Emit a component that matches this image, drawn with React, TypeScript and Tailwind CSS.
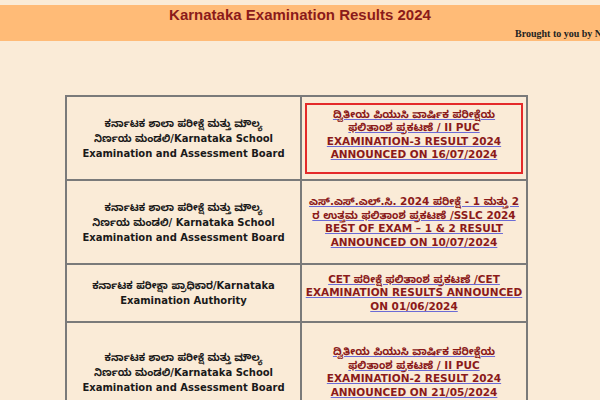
const ROWS = [
  {
    board: ['ಕರ್ನಾಟಕ ಶಾಲಾ ಪರೀಕ್ಷೆ ಮತ್ತು ಮೌಲ್ಯ', 'ನಿರ್ಣಯ ಮಂಡಲಿ/Karnataka School', 'Examination and Assessment Board'],
    result: ['ದ್ವಿತೀಯ ಪಿಯುಸಿ ವಾರ್ಷಿಕ ಪರೀಕ್ಷೆಯ', 'ಫಲಿತಾಂಶ ಪ್ರಕಟಣೆ / II PUC', 'EXAMINATION-3 RESULT 2024', 'ANNOUNCED ON 16/07/2024'],
    h: 'h-[84px]',
    boxed: true,
  },
  {
    board: ['ಕರ್ನಾಟಕ ಶಾಲಾ ಪರೀಕ್ಷೆ ಮತ್ತು ಮೌಲ್ಯ', 'ನಿರ್ಣಯ ಮಂಡಲಿ/ Karnataka School', 'Examination and Assessment Board'],
    result: ['ಎಸ್.ಎಸ್.ಎಲ್.ಸಿ. 2024 ಪರೀಕ್ಷೆ - 1 ಮತ್ತು 2', 'ರ ಉತ್ತಮ ಫಲಿತಾಂಶ ಪ್ರಕಟಣೆ /SSLC 2024', 'BEST OF EXAM – 1 & 2 RESULT', 'ANNOUNCED ON 10/07/2024'],
    h: 'h-[84px]',
  },
  {
    board: ['ಕರ್ನಾಟಕ ಪರೀಕ್ಷಾ ಪ್ರಾಧಿಕಾರ/Karnataka', 'Examination Authority'],
    result: ['CET ಪರೀಕ್ಷೆ ಫಲಿತಾಂಶ ಪ್ರಕಟಣೆ /CET', 'EXAMINATION RESULTS ANNOUNCED', 'ON 01/06/2024'],
    h: 'h-[58px]',
  },
  {
    board: ['ಕರ್ನಾಟಕ ಶಾಲಾ ಪರೀಕ್ಷೆ ಮತ್ತು ಮೌಲ್ಯ', 'ನಿರ್ಣಯ ಮಂಡಲಿ/Karnataka School', 'Examination and Assessment Board'],
    result: ['ದ್ವಿತೀಯ ಪಿಯುಸಿ ವಾರ್ಷಿಕ ಪರೀಕ್ಷೆಯ', 'ಫಲಿತಾಂಶ ಪ್ರಕಟಣೆ / II PUC', 'EXAMINATION-2 RESULT 2024', 'ANNOUNCED ON 21/05/2024'],
    h: 'h-[100px]',
  },
]

const cellFont = "font-['DejaVu_Sans','Noto_Sans_Kannada','Noto_Sans',sans-serif]"

export default function App() {
  return (
    <div className="w-[600px] h-[400px] overflow-hidden bg-[#faebd7] pt-[5px]">
      {/* header band */}
      <div className="h-[36px] bg-[#ffbb77] relative">
        <h1 className="text-center font-['Liberation_Sans',Arial,sans-serif] font-bold text-[15px] leading-[19px] text-[#8b1a1a]">
          Karnataka Examination Results 2024
        </h1>
        <div className="absolute left-[515px] top-[21px] whitespace-nowrap font-['Liberation_Serif',serif] font-bold text-[10px] text-[#222]">
          Brought to you by NIC
        </div>
      </div>

      {/* results table */}
      <div className="pt-[54px] pl-[65px]">
        <table className="border border-[#7a7a7a] border-separate border-spacing-0 w-[463px]">
          <tbody>
            {ROWS.map((row, i) => (
              <tr key={i} className={row.h}>
                <td className={`w-[235px] border border-[#7a7a7a] text-center align-middle ${cellFont} font-bold text-[10px] leading-[15px] text-[#1a1a1a]`}>
                  {row.board.map((l, j) => <div key={j}>{l}</div>)}
                </td>
                <td className="border border-[#7a7a7a] p-[3px] align-middle">
                  <div className={`${row.boxed ? 'border-2 border-[#e42a2a] h-[71px] pb-[7px]' : ''} flex flex-col justify-center text-center ${cellFont} font-bold text-[10.5px] leading-[13.5px] text-[#8b1a1a]`}>
                    {row.result.map((l, j) => (
                      <div key={j}>
                        <a href="#" className="underline decoration-[#6b6bd6]">{l}</a>
                      </div>
                    ))}
                  </div>
                </td>
              </tr>
            ))}
          </tbody>
        </table>
      </div>
    </div>
  )
}
